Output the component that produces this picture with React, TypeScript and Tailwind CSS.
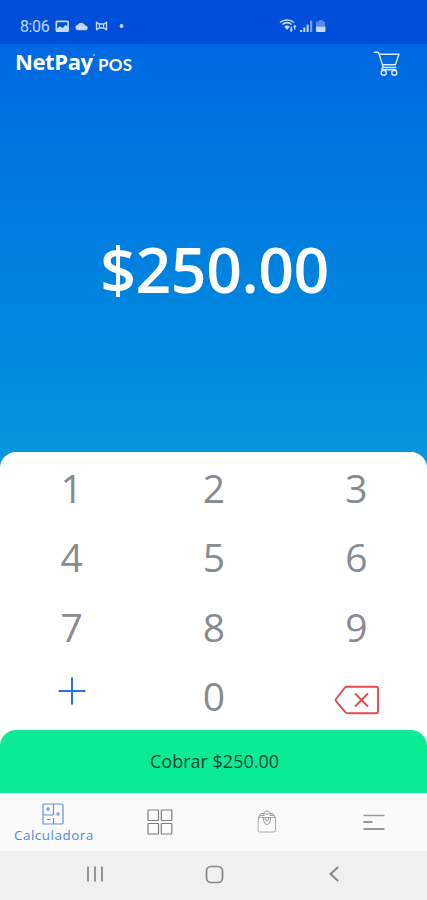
import { ReactNode } from 'react';
import clsx from 'clsx';

const AMOUNT = '$250.00';

function StatusBar() {
  return (
    <div className="flex h-11 items-end bg-[#004fda] pb-2 pl-5 text-[#c3d8fb]">
      <span className="w-[35px] font-['Roboto'] text-[16px] leading-[19px] tracking-[-0.4px]">8:06</span>
      <svg className="mb-[3px]" width="70" height="14" viewBox="0 0 70 14" fill="currentColor">
        <path
          fillRule="evenodd"
          d="M2 1.500h10.500a1.500 1.500 0 0 1 1.500 1.500v8.500a1.500 1.500 0 0 1-1.500 1.500H2a1.500 1.500 0 0 1-1.500-1.500V3A1.500 1.500 0 0 1 2 1.500zM2.200 3.200v6.300l2.800-2.300 2.500 1.800 3.200-3.200 1.700 1.700V3.200z"
        />
        <path d="M22.500 11.200a2.800 2.800 0 0 1 .3-5.500 4.300 4.300 0 0 1 7.500.8A2.400 2.400 0 0 1 31 11.200z" />
        <path
          d="M41.500 2.800v8.400M51.500 2.800v8.400M41.500 3l2.500 2h5l2.500-2M41.500 11l2.500-2h5l2.500 2M44.500 5v4M48.500 5v4"
          fill="none"
          stroke="currentColor"
          strokeWidth="1.300"
        />
        <circle cx="66.500" cy="7" r="1.900" />
      </svg>
      <svg className="mb-[2px] ml-[154px]" width="50" height="16" viewBox="0 0 50 16">
        <g fill="none" stroke="currentColor" strokeWidth="1.500">
          <path d="M1 4.500C5 1 11 1 15 4.500M3.300 6.500c3-2.400 6.400-2.400 9.400 0M5.700 9c1.600-1.100 3-1.100 4.600 0" />
          <path d="M12.300 8.500v5M15.700 7.500v4" />
        </g>
        <path d="M5.500 9h5L8 12z" fill="currentColor" />
        <path d="M10.500 11.500h3.600l-1.800 2.300zM14 9h3.600l-1.800-2.200z" fill="currentColor" />
        <g fill="currentColor">
          <path d="M21 12h2v2h-2zM24.300 9.500h2V14h-2zM27.600 6.500h2V14h-2z" />
          <path d="M31 2.500h2.200V14H31z" opacity=".6" />
          <path d="M40 2h3.500v1.500h2.500V8.500h-9V3.500h3z" opacity=".45" />
          <path d="M37 8.500h9.500V13a1 1 0 0 1-1 1H38a1 1 0 0 1-1-1z" />
        </g>
      </svg>
    </div>
  );
}

function Header() {
  return (
    <header className="flex h-10 items-start justify-between pl-[15px] pr-[26px] text-white">
      <div className="flex items-baseline pt-[2px]">
        <span className="inline-block w-[78px] font-['Open_Sans'] text-[22px] font-bold leading-[30px] tracking-[-0.4px]">
          NetPay
        </span>
        <span className="mb-auto mt-[8px] h-[2px] w-[2px] rounded-full bg-[#8dbdf6]" />
        <span className="ml-[3px] translate-y-px font-['Lato'] text-[17px] font-bold leading-[20px] tracking-[0.2px]">
          POS
        </span>
      </div>
      <CartIcon />
    </header>
  );
}

function CartIcon() {
  return (
    <svg className="mt-[6px]" width="28" height="27" viewBox="0 0 28 27" fill="none" stroke="#dceafd" strokeWidth="1.400">
      <path d="M.8 2.200h4.700l4.800 15.300h13M6.300 4.200h19.700l-3.600 10.600H9.500M10.300 17.500c-1.700 0-2 2.300 0 2.300h13" strokeLinejoin="round" />
      <circle cx="10.700" cy="22.700" r="2.500" />
      <circle cx="21.300" cy="22.700" r="2.500" />
    </svg>
  );
}

function Key({ children }: { children: ReactNode }) {
  return (
    <button className="flex items-center justify-center pl-px font-['Open_Sans'] text-[39px] leading-none text-[#888c8f]">
      {children}
    </button>
  );
}

function Keypad() {
  return (
    <div className="grid h-[278px] grid-cols-3 grid-rows-4 rounded-t-[16px] bg-white pt-px">
      {['1', '2', '3', '4', '5', '6', '7', '8', '9'].map((n) => (
        <Key key={n}>{n}</Key>
      ))}
      <Key>
        <svg className="mb-[8px]" width="28" height="28" viewBox="0 0 28 28" stroke="#2874e4" strokeWidth="2">
          <path d="M14 .5v27M.5 14h27" />
        </svg>
      </Key>
      <Key>0</Key>
      <Key>
        <svg className="ml-[2px] mt-[9px]" width="46" height="30" viewBox="0 0 46 30" fill="none" stroke="#e24a50" strokeWidth="1.900">
          <path d="M12.500 1.700H42a2 2 0 0 1 2 2v22.600a2 2 0 0 1-2 2H13.500a2.500 2.500 0 0 1-2-1L2 16.200a1.800 1.800 0 0 1 0-2.200L11 2.500a2 2 0 0 1 1.500-.8z" />
          <path d="M21 8.500l13 13M34 8.500l-13 13" />
        </svg>
      </Key>
    </div>
  );
}

function CalculatorIcon() {
  return (
    <svg width="22" height="22" viewBox="0 0 22 22" fill="none" stroke="#5f91e6" strokeWidth="1.200">
      <rect x="1" y="1" width="20" height="20" rx="1" />
      <path d="M11.500 1v11M11.500 15v6M1 12h10.500M14 11h4M16 9v4M4 6h4M6 4v4M5 16.500h3.500" />
    </svg>
  );
}

function GridIcon() {
  return (
    <svg width="26" height="26" viewBox="0 0 26 26" fill="none" stroke="#7d7d7d" strokeWidth="1.200">
      <rect x="1" y="1" width="10.500" height="10.500" rx=".5" />
      <rect x="14.300" y="1" width="10.500" height="10.500" rx=".5" />
      <rect x="1" y="14.500" width="10.500" height="10.500" rx=".5" />
      <rect x="14.300" y="14.500" width="10.500" height="10.500" rx=".5" />
    </svg>
  );
}

function BagIcon() {
  return (
    <svg width="20" height="23" viewBox="0 0 20 23" fill="none" stroke="#929292" strokeWidth="1">
      <path d="M1.500 7.500h17V20a1.800 1.800 0 0 1-1.800 2H2.800A1.800 1.800 0 0 1 1 20z" stroke="#aaa" />
      <path d="M1.500 7.500L4 3.500h3.500M18.500 7.500l-2.700-4h-3M3.500 5.500h3M13.500 5.500h3" />
      <path d="M6.800 6V4.200C6.800 0 13.200 0 13.200 4.200V6" />
      <path d="M6.500 7.500c0 4 1.200 7 3.500 7s3.500-3 3.500-7M8.500 7.500c0 5 3 5 3 0M8.200 4h3.600" />
    </svg>
  );
}

function MenuIcon() {
  return (
    <svg width="22" height="18" viewBox="0 0 22 18" strokeWidth="1.500">
      <path d="M.5 2.500h21" stroke="#9a9a9a" />
      <path d="M.5 9h9M.5 16h21" stroke="#777" />
    </svg>
  );
}

const TABS: { icon: ReactNode; label?: string; className: string }[] = [
  { icon: <CalculatorIcon />, label: 'Calculadora', className: 'pt-[10px]' },
  { icon: <GridIcon />, className: 'pt-[16px]' },
  { icon: <BagIcon />, className: 'pt-[17px]' },
  { icon: <MenuIcon />, className: 'pt-[20px]' },
];

function TabBar() {
  return (
    <nav className="grid h-[58px] grid-cols-4 bg-[#fafafa]">
      {TABS.map((tab, i) => (
        <div key={i} className={clsx('flex flex-col items-center', tab.className)}>
          {tab.icon}
          {tab.label && (
            <span className="mt-[2px] pl-px font-['Open_Sans'] text-[13.500px] leading-4 tracking-[0.5px] text-[#5487e2]">
              {tab.label}
            </span>
          )}
        </div>
      ))}
    </nav>
  );
}

function SystemBar() {
  return (
    <div className="flex h-[49px] items-center justify-between bg-[#f0f0f0] pb-[3px] pl-[86px] pr-[87px]">
      <svg width="18" height="18" viewBox="0 0 18 18" stroke="#858585" strokeWidth="1.700">
        <path d="M2 1.500v15M9 1.500v15M16 1.500v15" />
      </svg>
      <svg className="-ml-[3px]" width="19" height="19" viewBox="0 0 19 19" fill="none" stroke="#858585" strokeWidth="1.700">
        <rect x="1.500" y="1.500" width="16" height="16" rx="4.500" />
      </svg>
      <svg width="12" height="18" viewBox="0 0 12 18" fill="none" stroke="#858585" strokeWidth="1.900">
        <path d="M10.200 2L2.500 9l7.700 7" />
      </svg>
    </div>
  );
}

export default function App() {
  return (
    <div className="flex h-[900px] w-full flex-col overflow-hidden bg-white">
      <StatusBar />
      <div className="flex flex-col bg-linear-to-b from-[#0068e2] from-0% to-[#0a95dd] to-[60%]">
        <Header />
        <div className="flex h-[368px] items-center justify-center pl-[2px] pt-[3px] font-['Open_Sans'] text-[62.500px] font-semibold leading-none tracking-[-0.4px] text-white">
          {AMOUNT}
        </div>
        <Keypad />
      </div>
      <div className="bg-white">
        <button className="block h-[63px] w-full rounded-t-[16px] bg-[#0beb96] pl-[2px] font-['Open_Sans'] text-[18px] font-medium text-[#0f4735]">
          Cobrar {AMOUNT}
        </button>
      </div>
      <TabBar />
      <SystemBar />
    </div>
  );
}
